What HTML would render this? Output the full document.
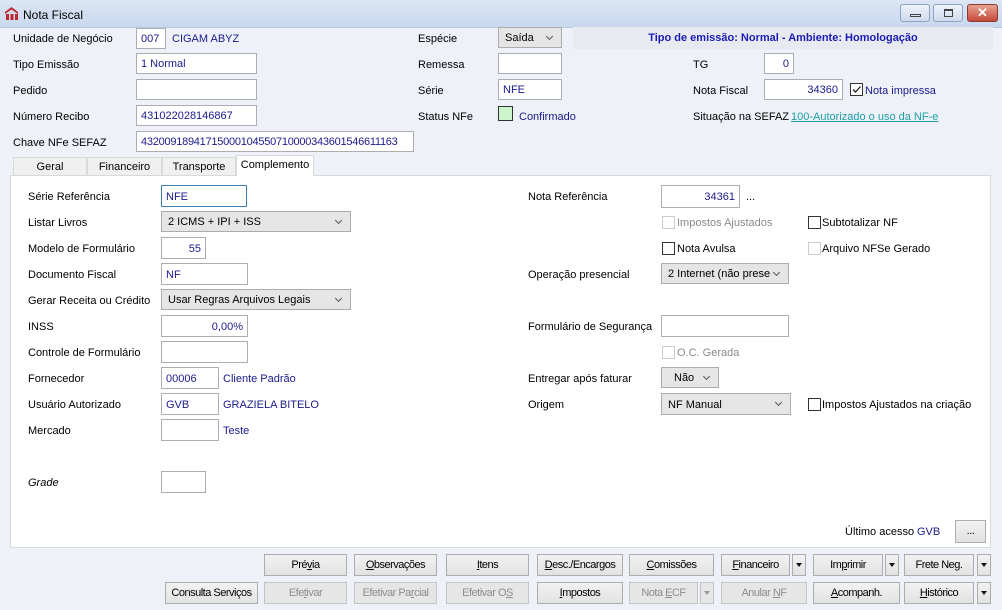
<!DOCTYPE html>
<html><head><meta charset="utf-8"><style>
*{box-sizing:border-box;margin:0;padding:0}
body{width:1002px;height:610px;overflow:hidden;background:#eef1f8;font-family:"Liberation Sans",Arial,sans-serif;font-size:11px;color:#000;position:relative}
.a{position:absolute;white-space:nowrap}
.t{position:absolute;white-space:nowrap;line-height:13px;transform:translateY(-5px)}
.in{position:absolute;background:#fff;border:1px solid #abadb3;color:#1a1a8c;padding:1px 4px 0;display:flex;align-items:center;white-space:nowrap;overflow:hidden}
.r{justify-content:flex-end}
.sel{position:absolute;background:#e5e5e5;border:1px solid #acacac;padding:1px 6px 0;display:flex;align-items:center;white-space:nowrap}
.sel:after{content:"";position:absolute;right:9px;top:6px;width:4px;height:4px;border-right:1px solid #555;border-bottom:1px solid #555;transform:rotate(45deg)}
.b{color:#1a1a8c}
.cb{position:absolute;width:13px;height:13px;border:1px solid #333;background:#fff}
.cb.d{border-color:#ccc}
.gr{color:#8a8a8a}
.btn{position:absolute;height:22px;background:linear-gradient(#f2f2f2,#e2e2e2);border:1px solid #adadad;text-align:center;line-height:21px;font-size:11px;letter-spacing:-0.5px}
.btn.d{background:#e6e6e6;color:#8d8d8d;border-color:#c5c5c5}
.ar{position:absolute;height:22px;width:14px;background:linear-gradient(#f2f2f2,#e2e2e2);border:1px solid #adadad}
.ar:after{content:"";position:absolute;left:3px;top:8px;border-left:3.5px solid transparent;border-right:3.5px solid transparent;border-top:4px solid #111}
.ar.d{background:#e6e6e6;border-color:#c5c5c5}.ar.d:after{border-top-color:#999}
.tab{position:absolute;top:157px;height:18px;background:#f0f0f0;border:1px solid #d9d9d9;border-bottom:none;text-align:center;line-height:19px}
u{text-decoration:underline}
</style></head><body>
<div class="a" style="left:0;top:0;width:1002px;height:28px;background:linear-gradient(#dce6f4,#c9d8ee);border-bottom:1px solid #b9c9e0"></div>
<svg class="a" style="left:4px;top:6px" width="15" height="15" viewBox="0 0 15 15"><path d="M1 6 L7.5 1 L14 6 L14 8 L7.5 3.5 L1 8Z" fill="#c0272d"/><rect x="2" y="8" width="3" height="6" fill="#c0272d"/><rect x="6.5" y="8" width="3" height="6" fill="#c0272d"/><rect x="11" y="8" width="3" height="6" fill="#c0272d"/></svg>
<div class="a" style="left:23px;top:8px;font-size:12px">Nota Fiscal</div>
<div class="a" style="left:900px;top:4px;width:30px;height:18px;border:1px solid #8ea3c0;border-radius:3px;background:linear-gradient(#eef3fa,#cfdbec)"><div class="a" style="left:9px;top:9px;width:11px;height:3px;border:1px solid #444"></div></div>
<div class="a" style="left:933px;top:4px;width:30px;height:18px;border:1px solid #8ea3c0;border-radius:3px;background:linear-gradient(#eef3fa,#cfdbec)"><div class="a" style="left:10px;top:4px;width:9px;height:8px;border:1px solid #444;border-top-width:2px"></div></div>
<div class="a" style="left:967px;top:4px;width:31px;height:18px;border:1px solid #8b3a32;border-radius:3px;background:linear-gradient(#e8a393,#c5493a);color:#fff;font-weight:bold;font-size:13px;text-align:center;line-height:16px">✕</div>

<div class="t" style="left:13px;top:38px">Unidade de Negócio</div>
<div class="in" style="left:136px;top:28px;width:30px;height:21px">007</div>
<div class="t b" style="left:172px;top:38px">CIGAM ABYZ</div>
<div class="t" style="left:13px;top:64px">Tipo Emissão</div>
<div class="in" style="left:136px;top:53px;width:121px;height:21px">1 Normal</div>
<div class="t" style="left:13px;top:90px">Pedido</div>
<div class="in" style="left:136px;top:79px;width:121px;height:21px"></div>
<div class="t" style="left:13px;top:116px">Número Recibo</div>
<div class="in" style="left:136px;top:105px;width:121px;height:21px">431022028146867</div>
<div class="t" style="left:13px;top:142px">Chave NFe SEFAZ</div>
<div class="in" style="left:136px;top:131px;width:278px;height:21px;letter-spacing:-0.25px">43200918941715000104550710000343601546611163</div>

<div class="t" style="left:418px;top:38px">Espécie</div>
<div class="sel" style="left:498px;top:27px;width:64px;height:21px">Saída</div>
<div class="a" style="left:573px;top:27px;width:420px;height:22px;background:#e7eaf1;color:#1c1cb4;font-weight:bold;text-align:center;line-height:23px">Tipo de emissão: Normal - Ambiente: Homologação</div>
<div class="t" style="left:418px;top:64px">Remessa</div>
<div class="in" style="left:498px;top:53px;width:64px;height:21px"></div>
<div class="t" style="left:418px;top:90px">Série</div>
<div class="in" style="left:498px;top:79px;width:64px;height:21px">NFE</div>
<div class="t" style="left:418px;top:116px">Status NFe</div>
<div class="a" style="left:498px;top:106px;width:15px;height:15px;background:#ccf5cc;border:1px solid #333"></div>
<div class="t b" style="left:519px;top:116px">Confirmado</div>

<div class="t" style="left:693px;top:64px">TG</div>
<div class="in r" style="left:764px;top:53px;width:30px;height:21px">0</div>
<div class="t" style="left:693px;top:90px">Nota Fiscal</div>
<div class="in r" style="left:764px;top:79px;width:79px;height:21px">34360</div>
<div class="cb" style="left:850px;top:83px"><svg width="11" height="11" style="position:absolute;left:0;top:0"><path d="M2 5.5 L4.5 8 L9.5 2.5" stroke="#222" stroke-width="1.3" fill="none"/></svg></div>
<div class="t b" style="left:865px;top:90px">Nota impressa</div>
<div class="t" style="left:693px;top:116px">Situação na SEFAZ</div>
<div class="t" style="left:791px;top:116px;color:#1ea0a6;text-decoration:underline">100-Autorizado o uso da NF-e</div>

<div class="tab" style="left:13px;width:74px">Geral</div>
<div class="tab" style="left:87px;width:75px">Financeiro</div>
<div class="tab" style="left:162px;width:74px">Transporte</div>
<div class="a" style="left:10px;top:175px;width:981px;height:373px;background:#fff;border:1px solid #d9d9d9"></div>
<div class="tab" style="left:236px;top:155px;height:21px;width:78px;background:#fff;line-height:19px">Complemento</div>

<div class="t" style="left:28px;top:196px">Série Referência</div>
<div class="in" style="left:161px;top:185px;width:86px;height:22px;border-color:#3c7fb1">NFE</div>
<div class="t" style="left:28px;top:222px">Listar Livros</div>
<div class="sel" style="left:161px;top:211px;width:190px;height:21px">2 ICMS + IPI + ISS</div>
<div class="t" style="left:28px;top:248px">Modelo de Formulário</div>
<div class="in r" style="left:161px;top:237px;width:45px;height:22px">55</div>
<div class="t" style="left:28px;top:274px">Documento Fiscal</div>
<div class="in" style="left:161px;top:263px;width:87px;height:22px">NF</div>
<div class="t" style="left:28px;top:300px">Gerar Receita ou Crédito</div>
<div class="sel" style="left:161px;top:289px;width:190px;height:21px">Usar Regras Arquivos Legais</div>
<div class="t" style="left:28px;top:326px">INSS</div>
<div class="in r" style="left:161px;top:315px;width:87px;height:22px">0,00%</div>
<div class="t" style="left:28px;top:352px">Controle de Formulário</div>
<div class="in" style="left:161px;top:341px;width:87px;height:22px"></div>
<div class="t" style="left:28px;top:378px">Fornecedor</div>
<div class="in" style="left:161px;top:367px;width:58px;height:22px">00006</div>
<div class="t b" style="left:223px;top:378px">Cliente Padrão</div>
<div class="t" style="left:28px;top:404px">Usuário Autorizado</div>
<div class="in" style="left:161px;top:393px;width:58px;height:22px">GVB</div>
<div class="t b" style="left:223px;top:404px">GRAZIELA BITELO</div>
<div class="t" style="left:28px;top:430px">Mercado</div>
<div class="in" style="left:161px;top:419px;width:58px;height:22px"></div>
<div class="t b" style="left:223px;top:430px">Teste</div>
<div class="t" style="left:28px;top:482px;font-style:italic">Grade</div>
<div class="in" style="left:161px;top:471px;width:45px;height:22px"></div>

<div class="t" style="left:528px;top:196px">Nota Referência</div>
<div class="in r" style="left:661px;top:185px;width:79px;height:23px">34361</div>
<div class="t" style="left:746px;top:196px">...</div>
<div class="cb d" style="left:662px;top:216px"></div><div class="t gr" style="left:677px;top:222px">Impostos Ajustados</div>
<div class="cb" style="left:808px;top:216px"></div><div class="t" style="left:822px;top:222px">Subtotalizar NF</div>
<div class="cb" style="left:662px;top:242px"></div><div class="t" style="left:677px;top:248px">Nota Avulsa</div>
<div class="cb d" style="left:808px;top:242px"></div><div class="t" style="left:822px;top:248px">Arquivo NFSe Gerado</div>
<div class="t" style="left:528px;top:274px">Operação presencial</div>
<div class="sel" style="left:661px;top:263px;width:128px;height:21px">2 Internet (não prese</div>
<div class="t" style="left:528px;top:326px">Formulário de Segurança</div>
<div class="in" style="left:661px;top:315px;width:128px;height:22px"></div>
<div class="cb d" style="left:662px;top:346px"></div><div class="t gr" style="left:677px;top:352px">O.C. Gerada</div>
<div class="t" style="left:528px;top:378px">Entregar após faturar</div>
<div class="sel" style="left:661px;top:367px;width:58px;height:21px;padding-left:12px">Não</div>
<div class="t" style="left:528px;top:404px">Origem</div>
<div class="sel" style="left:661px;top:393px;width:130px;height:22px">NF Manual</div>
<div class="cb" style="left:808px;top:398px"></div><div class="t" style="left:822px;top:404px">Impostos Ajustados na criação</div>

<div class="t" style="left:845px;top:531px">Último acesso</div>
<div class="t b" style="left:917px;top:531px">GVB</div>
<div class="btn" style="left:955px;top:520px;width:31px;height:23px">...</div>

<div class="btn" style="left:264px;top:554px;width:83px">Pré<u>v</u>ia</div>
<div class="btn" style="left:354px;top:554px;width:83px"><u>O</u>bservações</div>
<div class="btn" style="left:446px;top:554px;width:83px"><u>I</u>tens</div>
<div class="btn" style="left:537px;top:554px;width:86px"><u>D</u>esc./Encargos</div>
<div class="btn" style="left:629px;top:554px;width:85px"><u>C</u>omissões</div>
<div class="btn" style="left:721px;top:554px;width:69px"><u>F</u>inanceiro</div><div class="ar" style="left:792px;top:554px"></div>
<div class="btn" style="left:813px;top:554px;width:70px">Im<u>p</u>rimir</div><div class="ar" style="left:885px;top:554px"></div>
<div class="btn" style="left:904px;top:554px;width:70px">Frete Ne<u>g</u>.</div><div class="ar" style="left:977px;top:554px"></div>

<div class="btn" style="left:165px;top:582px;width:93px">Consulta Serviços</div>
<div class="btn d" style="left:264px;top:582px;width:83px">Efe<u>t</u>ivar</div>
<div class="btn d" style="left:354px;top:582px;width:83px">Efetivar Pa<u>r</u>cial</div>
<div class="btn d" style="left:446px;top:582px;width:83px">Efetivar O<u>S</u></div>
<div class="btn" style="left:537px;top:582px;width:86px"><u>I</u>mpostos</div>
<div class="btn d" style="left:629px;top:582px;width:69px">Nota <u>E</u>CF</div><div class="ar d" style="left:700px;top:582px"></div>
<div class="btn d" style="left:721px;top:582px;width:86px">Anular <u>N</u>F</div>
<div class="btn" style="left:813px;top:582px;width:87px"><u>A</u>companh.</div>
<div class="btn" style="left:904px;top:582px;width:70px"><u>H</u>istórico</div><div class="ar" style="left:977px;top:582px"></div>
</body></html>
